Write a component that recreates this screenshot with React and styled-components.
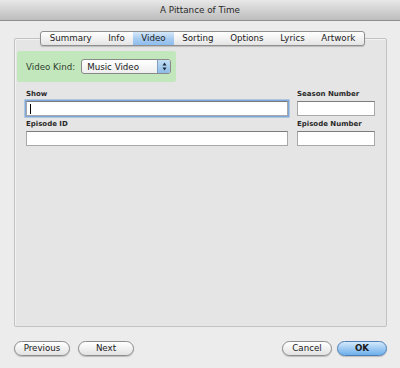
import React from 'react';
import styled, { createGlobalStyle } from 'styled-components';

const Global = createGlobalStyle`
  html, body {
    margin: 0;
    padding: 0;
    background: #ececec;
  }
  body {
    font-family: "DejaVu Sans", "Liberation Sans", sans-serif;
    color: #1e1e1e;
  }
`;

const Window = styled.div`
  width: 400px;
  height: 368px;
  display: flex;
  flex-direction: column;
  background: #ececec;
  overflow: hidden;
`;

const TitleBar = styled.div`
  height: 20px;
  line-height: 20px;
  text-align: center;
  font-size: 8.8px;
  color: #2a2a2a;
  background: linear-gradient(#e8e8e8, #d2d2d2 50%, #bdbdbd);
  border-bottom: 1px solid #8e8e8e;
  flex-shrink: 0;
`;

const Body = styled.div`
  display: flex;
  flex-direction: column;
  padding: 10px 13px 0 14px;
`;

const TabBar = styled.div`
  align-self: center;
  margin-left: 4px;
  display: flex;
  height: 13px;
  border: 1px solid #8f8f8f;
  border-radius: 3px;
  background: linear-gradient(#ffffff, #f2f2f2 50%, #e4e4e4);
  box-shadow: 0 1px 1px rgba(0, 0, 0, 0.18);
  position: relative;
  z-index: 1;
  overflow: hidden;
`;

const Tab = styled.div`
  padding: 0 8.3px;
  font-size: 8.7px;
  line-height: 13px;
  color: #1c1c1c;
  background: ${(p) =>
    p.$active ? 'linear-gradient(#d6e8fa, #a9cdf1 50%, #8dbcec)' : 'transparent'};
`;

const Group = styled.div`
  margin-top: -8px;
  height: 289px;
  box-sizing: border-box;
  border: 1px solid #c2c2c2;
  border-radius: 2px;
  background: #e5e5e5;
  box-shadow: inset 1px 1px 0 #f2f2f2;
  padding: 12px 2px 0 2px;
  display: flex;
  flex-direction: column;
`;

const Highlight = styled.div`
  width: 159px;
  height: 31px;
  box-sizing: border-box;
  background: #c3e7bd;
  border-radius: 2px;
  display: flex;
  align-items: center;
  padding: 0 0 0 9px;
  gap: 6px;
`;

const KindLabel = styled.span`
  font-size: 8.7px;
  color: #2e3e2e;
`;

const Popup = styled.div`
  width: 90px;
  height: 15px;
  box-sizing: border-box;
  border: 1px solid #8a8a8a;
  border-radius: 3px;
  background: linear-gradient(#ffffff, #eeeeee);
  display: flex;
  align-items: center;
  justify-content: space-between;
  overflow: hidden;
`;

const PopupText = styled.span`
  font-size: 8.7px;
  padding-left: 5px;
  color: #1a1a1a;
`;

const Stepper = styled.div`
  width: 12px;
  height: 100%;
  background: linear-gradient(#c4def4, #8dbbe6);
  border-left: 1px solid #7f9fc2;
  display: flex;
  align-items: center;
  justify-content: center;
`;

const Fields = styled.div`
  display: grid;
  grid-template-columns: 262px 78px;
  column-gap: 9px;
  margin: 8px 0 0 9px;
`;

const Field = styled.div`
  display: flex;
  flex-direction: column;
  margin-bottom: 4px;
`;

const Label = styled.div`
  font-size: 7px;
  font-weight: bold;
  line-height: 9px;
  color: #2a2a2a;
  margin-bottom: 2px;
`;

const Input = styled.div`
  height: 15px;
  box-sizing: border-box;
  background: #fff;
  border: 1px solid #a8a8a8;
  border-top-color: #7c7c7c;
  display: flex;
  align-items: center;
  padding-left: 3px;
  box-shadow: ${(p) => (p.$focused ? '0 0 0 1.5px #7da7d9' : 'none')};
`;

const Caret = styled.span`
  width: 1px;
  height: 10px;
  background: #000;
`;

const Footer = styled.div`
  display: flex;
  justify-content: space-between;
  margin-top: 14px;
`;

const ButtonGroup = styled.div`
  display: flex;
  gap: ${(p) => p.$gap}px;
`;

const Button = styled.div`
  width: ${(p) => p.$w}px;
  height: 15px;
  box-sizing: border-box;
  border-radius: 8px;
  border: 1px solid ${(p) => (p.$primary ? '#4e7fb6' : '#8c8c8c')};
  background: ${(p) =>
    p.$primary
      ? 'linear-gradient(#d4e9fc, #9fcaf3 50%, #6eb0ec)'
      : 'linear-gradient(#ffffff, #f1f1f1 50%, #e2e2e2)'};
  box-shadow: 0 1px 1px rgba(0, 0, 0, 0.2);
  font-size: 8.7px;
  line-height: 13px;
  text-align: center;
  color: #1a1a1a;
  font-weight: ${(p) => (p.$primary ? 'bold' : 'normal')};
`;

const tabs = ['Summary', 'Info', 'Video', 'Sorting', 'Options', 'Lyrics', 'Artwork'];

export default function App() {
  return (
    <Window>
      <Global />
      <TitleBar>A Pittance of Time</TitleBar>
      <Body>
        <TabBar>
          {tabs.map((t) => (
            <Tab key={t} $active={t === 'Video'}>
              {t}
            </Tab>
          ))}
        </TabBar>
        <Group>
          <Highlight>
            <KindLabel>Video Kind:</KindLabel>
            <Popup>
              <PopupText>Music Video</PopupText>
              <Stepper>
                <svg width="7" height="11" viewBox="0 0 7 11">
                  <path d="M3.5 1.5 L5.5 4.5 H1.5 Z" fill="#1b2a3a" />
                  <path d="M3.5 9.5 L5.5 6.5 H1.5 Z" fill="#1b2a3a" />
                </svg>
              </Stepper>
            </Popup>
          </Highlight>
          <Fields>
            <Field>
              <Label>Show</Label>
              <Input $focused>
                <Caret />
              </Input>
            </Field>
            <Field>
              <Label>Season Number</Label>
              <Input />
            </Field>
            <Field>
              <Label>Episode ID</Label>
              <Input />
            </Field>
            <Field>
              <Label>Episode Number</Label>
              <Input />
            </Field>
          </Fields>
        </Group>
        <Footer>
          <ButtonGroup $gap={8}>
            <Button $w={56}>Previous</Button>
            <Button $w={56}>Next</Button>
          </ButtonGroup>
          <ButtonGroup $gap={5}>
            <Button $w={50}>Cancel</Button>
            <Button $w={50} $primary>
              OK
            </Button>
          </ButtonGroup>
        </Footer>
      </Body>
    </Window>
  );
}
